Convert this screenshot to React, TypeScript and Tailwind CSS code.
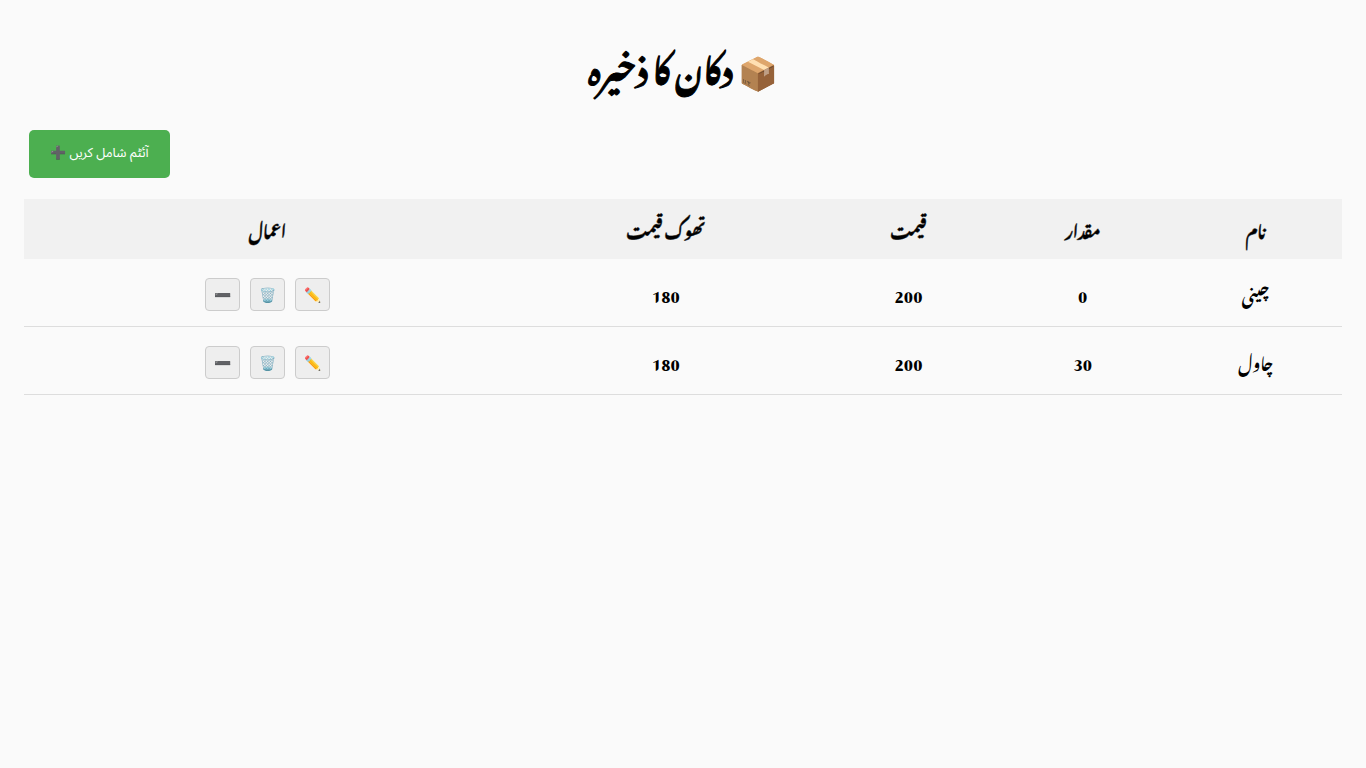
import React from "react";

type Item = { name: string; quantity: number; price: number; wholesale: number };

const items: Item[] = [
  { name: "چینی", quantity: 0, price: 200, wholesale: 180 },
  { name: "چاول", quantity: 30, price: 200, wholesale: 180 },
];

const columns = ["نام", "مقدار", "قیمت", "تھوک قیمت", "اعمال"];

const actions = [
  { label: "ترمیم", icon: "✏️" },
  { label: "حذف", icon: "🗑️" },
  { label: "کم کریں", icon: "➖" },
];

const cell = "border-b border-[#ddd] px-[10px]";

export default function App() {
  return (
    <main
      dir="rtl"
      lang="ur"
      className="min-h-screen bg-[#fafafa] p-6 font-['Noto_Nastaliq_Urdu',serif] font-bold text-black"
    >
      <h1 className="text-center text-[32px] leading-[80px] font-bold [-webkit-text-stroke:1px_black]">
        📦 دکان کا ذخیرہ
      </h1>
      <div className="mx-[5px] mt-[26px] flex justify-end">
        <button
          type="button"
          className="h-12 rounded-[5px] bg-[#4caf50] px-[21px] font-['Noto_Sans_Arabic','Liberation_Sans',sans-serif] text-[13px] font-normal text-white"
        >
          آئٹم شامل کریں ➕
        </button>
      </div>
      <table className="mt-[21px] w-full border-separate border-spacing-0 text-center">
        <thead>
          <tr className="h-15 bg-[#f1f1f1]">
            {columns.map((c) => (
              <th key={c} scope="col" className="px-[10px] font-bold [-webkit-text-stroke:1px_rgba(0,0,0,0.6)]">
                {c}
              </th>
            ))}
          </tr>
        </thead>
        <tbody>
          {items.map((i) => (
            <tr key={i.name} className="h-17">
              <td className={cell}>{i.name}</td>
              <td className={cell}>{i.quantity}</td>
              <td className={cell}>{i.price}</td>
              <td className={cell}>{i.wholesale}</td>
              <td className={cell}>
                <div className="flex justify-center pt-1">
                  {actions.map((a) => (
                    <button
                      key={a.label}
                      type="button"
                      aria-label={a.label}
                      className="mx-[5px] h-[33px] rounded-[4px] border border-[#ccc] bg-[#eee] px-2 font-['Liberation_Sans',sans-serif] text-sm font-normal"
                    >
                      {a.icon}
                    </button>
                  ))}
                </div>
              </td>
            </tr>
          ))}
        </tbody>
      </table>
    </main>
  );
}
